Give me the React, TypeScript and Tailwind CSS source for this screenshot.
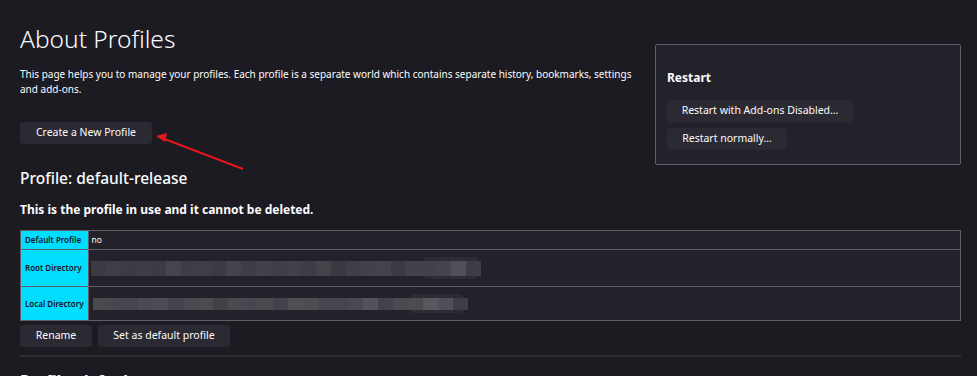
import React from 'react'

const FONT = { fontFamily: '"Noto Sans", "Open Sans", sans-serif' }

const rootBlocks = [
    'bg-[#3c3b43]', 'bg-[#403f47]', 'bg-[#3d3c44]', 'bg-[#3f3e46]', 'bg-[#3d3c44]', 'bg-[#46454c]',
    'bg-[#3f3e46]', 'bg-[#403f47]', 'bg-[#3c3b43]', 'bg-[#44434b]', 'bg-[#3f3e46]', 'bg-[#424149]',
    'bg-[#403f47]', 'bg-[#424149]', 'bg-[#3e3d45]', 'bg-[#44434a]', 'bg-[#3a393f]', 'bg-[#403f47]',
    'bg-[#424149]', 'bg-[#44434a]', 'bg-[#3c3b43]', 'bg-[#43424a]', 'bg-[#434248]', 'bg-[#45444c]',
    'bg-[#4f5058]', 'bg-[#3e3d45]',
]

const localBlocks = [
    'bg-[#4a4950]', 'bg-[#48474e]', 'bg-[#47464e]', 'bg-[#4b4a52]', 'bg-[#4f4d53]', 'bg-[#45444c]',
    'bg-[#4a4950]', 'bg-[#4c4b52]', 'bg-[#424148]', 'bg-[#4a4950]', 'bg-[#48474f]', 'bg-[#4a4950]',
    'bg-[#43424a]', 'bg-[#4f4e54]', 'bg-[#4d4c53]', 'bg-[#47464e]', 'bg-[#46454d]', 'bg-[#4a4951]',
    'bg-[#545259]', 'bg-[#43424a]', 'bg-[#4a4950]', 'bg-[#4c4b52]', 'bg-[#59585e]', 'bg-[#4e5057]',
    'bg-[#3f3e44]',
]

const Button = ({ children, className = '' }: { children: React.ReactNode; className?: string }) => (
    <button className={`h-[22px] rounded-[4px] bg-[#2b2a33] text-[10.5px] text-[#fbfbfe] ${className}`}>
        {children}
    </button>
)

// pixelated / redacted path
const Mosaic = ({ blocks, height, glow }: { blocks: string[]; height: string; glow: string }) => (
    <div className="relative flex">
        <div className={`absolute rounded-[4px] bg-[#2d2c35] ${glow}`} />
        {blocks.map((c, i) => (
            <div key={i} className={`relative w-[15px] ${height} ${c}`} />
        ))}
    </div>
)

const HeaderCell = ({ children }: { children: React.ReactNode }) => (
    <th className="w-[67px] bg-[#00ddff] border border-[#5f5e67] px-[4px] text-left text-[8px] font-semibold text-[#15141a] whitespace-nowrap">
        {children}
    </th>
)

export default function App() {
    return (
        <div className="relative min-h-[376px] bg-[#1c1b22] text-[#fbfbfe] overflow-hidden" style={FONT}>
            <div className="pl-[20px] pr-[16px] pt-[22px]">
                <div className="flex items-start">
                    <div className="flex-1 mr-[12px]">
                        <h1 className="text-[24.5px] font-light leading-[34px]">About Profiles</h1>
                        <p className="mt-[11px] text-[10px] leading-[15px]">
                            This page helps you to manage your profiles. Each profile is a separate world which contains
                            separate history, bookmarks, settings and add-ons.
                        </p>
                        <Button className="mt-[25px] w-[132px]">Create a New Profile</Button>
                    </div>
                    <div className="mt-[22px] w-[306px] h-[121px] rounded-[2px] border border-[#5f5e67] bg-[#23222b] px-[11px] pt-[25px]">
                        <h3 className="text-[12px] font-bold leading-[16px]">Restart</h3>
                        <div className="mt-[14px] flex flex-col items-start gap-[6px]">
                            <Button className="w-[186px]">Restart with Add-ons Disabled…</Button>
                            <Button className="w-[120px]">Restart normally…</Button>
                        </div>
                    </div>
                </div>

                <h2 className="mt-[1px] text-[15.5px] font-medium leading-[24px]">Profile: default-release</h2>
                <h3 className="mt-[11px] text-[12px] font-bold leading-[18px]">
                    This is the profile in use and it cannot be deleted.
                </h3>

                <table className="mt-[11px] w-full border-collapse border border-[#5f5e67] bg-[#23222b]">
                    <tbody>
                        <tr className="h-[19px]">
                            <HeaderCell>Default Profile</HeaderCell>
                            <td className="border border-[#5f5e67] px-[3px] text-[8.5px]">no</td>
                        </tr>
                        <tr className="h-[37px]">
                            <HeaderCell>Root Directory</HeaderCell>
                            <td className="border border-[#5f5e67] px-[2px]">
                                <Mosaic blocks={rootBlocks} height="h-[15px]" glow="left-[333px] top-[-4px] w-[54px] h-[22px]" />
                            </td>
                        </tr>
                        <tr className="h-[34px]">
                            <HeaderCell>Local Directory</HeaderCell>
                            <td className="border border-[#5f5e67] px-[4px]">
                                <Mosaic blocks={localBlocks} height="h-[12px]" glow="left-[317px] top-[-4px] w-[53px] h-[19px]" />
                            </td>
                        </tr>
                    </tbody>
                </table>

                <div className="mt-[4px] flex gap-[6px]">
                    <Button className="w-[72px]">Rename</Button>
                    <Button className="w-[132px]">Set as default profile</Button>
                </div>

                <div className="mt-[8px] h-[2px] bg-[#2f2e36]" />

                <h2 className="mt-[12px] text-[15.5px] font-bold leading-[24px]">Profile: default</h2>
            </div>

            <svg className="absolute left-0 top-0 pointer-events-none" width="977" height="376">
                <line x1="243" y1="169" x2="162" y2="138" stroke="#e3161c" strokeWidth="2" />
                <polygon points="156,136 167,133 165,142" fill="#e3161c" />
            </svg>
        </div>
    )
}
